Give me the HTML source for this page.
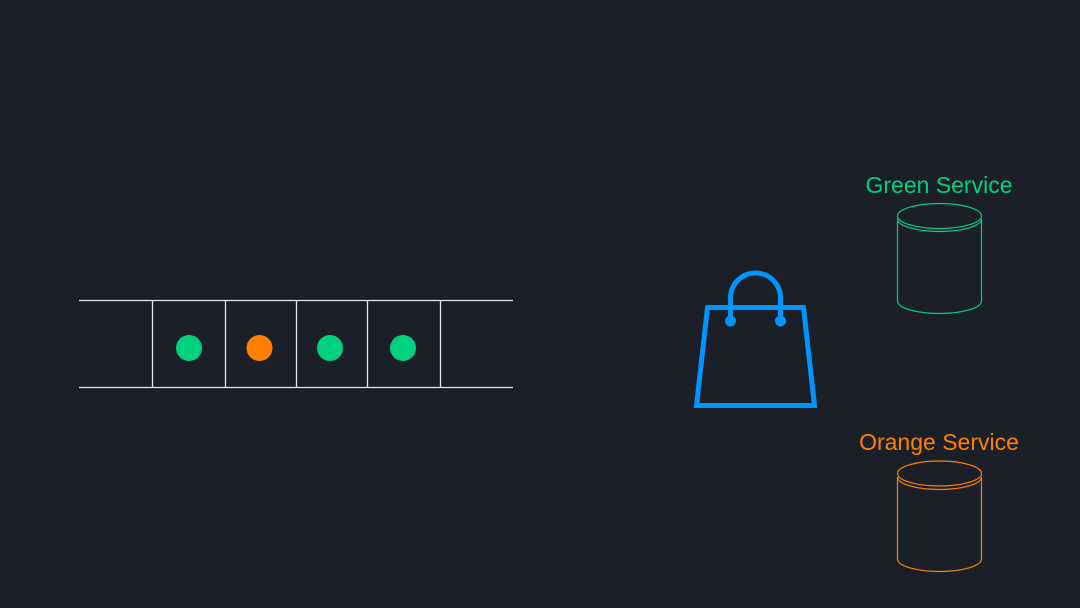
<!DOCTYPE html>
<html><head><style>
html,body{margin:0;padding:0;background:#1b2028;width:1080px;height:608px;overflow:hidden}
svg{display:block}
text{font-family:"Liberation Sans",sans-serif;font-size:23px}
</style></head><body>
<svg width="1080" height="608" viewBox="0 0 1080 608">
<rect width="1080" height="608" fill="#1b2028"/>
<g stroke="#e6e6e6" stroke-width="1.3" fill="none">
<line x1="79" y1="300.5" x2="513" y2="300.5"/>
<line x1="79" y1="387.5" x2="513" y2="387.5"/>
<line x1="152.5" y1="300" x2="152.5" y2="388"/>
<line x1="225.5" y1="300" x2="225.5" y2="388"/>
<line x1="296.5" y1="300" x2="296.5" y2="388"/>
<line x1="367.5" y1="300" x2="367.5" y2="388"/>
<line x1="440.5" y1="300" x2="440.5" y2="388"/>
</g>
<circle cx="189" cy="348" r="13" fill="#00d17f"/>
<circle cx="259.5" cy="348" r="13" fill="#ff8000"/>
<circle cx="330" cy="348" r="13" fill="#00d17f"/>
<circle cx="403" cy="348" r="13" fill="#00d17f"/>
<g stroke="#0094ff" stroke-width="5" fill="none">
<path d="M707.5 307.5 L803.5 307.5 L814.5 405.5 L696.5 405.5 Z"/>
<path d="M730.5 321 V298 A25 25 0 0 1 780.5 298 V321"/>
</g>
<circle cx="730.5" cy="321" r="5.5" fill="#0094ff"/>
<circle cx="780.5" cy="321" r="5.5" fill="#0094ff"/>
<text x="939" y="193" text-anchor="middle" fill="#00d17f">Green Service</text>
<g stroke="#00d17f" stroke-width="1.2" fill="none">
<ellipse cx="939.5" cy="216" rx="42" ry="12.5"/>
<path d="M897.5 219 A42 12.5 0 0 0 981.5 219"/>
<path d="M897.5 219 V301 A42 12.5 0 0 0 981.5 301 V219"/>
</g>
<text x="939" y="450" text-anchor="middle" fill="#ff8000">Orange Service</text>
<g stroke="#ff8000" stroke-width="1.2" fill="none">
<ellipse cx="939.5" cy="473.5" rx="42" ry="12.5"/>
<path d="M897.5 477 A42 12.5 0 0 0 981.5 477"/>
<path d="M897.5 477 V559 A42 12.5 0 0 0 981.5 559 V477"/>
</g>
</svg>
</body></html>
